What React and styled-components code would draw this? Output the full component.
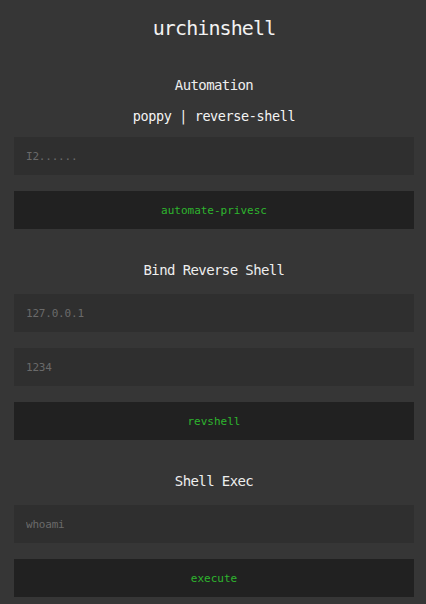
import React from 'react';
import styled, { createGlobalStyle } from 'styled-components';

const GlobalStyle = createGlobalStyle`
	html, body {
		margin: 0;
		padding: 0;
		background: #363636;
	}

	body {
		font-family: "DejaVu Sans Mono", "Liberation Mono", monospace;
		color: #eeeeee;
	}
`;

const sections = [
	{
		title    : 'Automation',
		subtitle : 'poppy | reverse-shell',
		inputs   : ['I2......'],
		action   : 'automate-privesc',
	},
	{
		title  : 'Bind Reverse Shell',
		inputs : ['127.0.0.1', '1234'],
		action : 'revshell',
	},
	{
		title  : 'Shell Exec',
		inputs : ['whoami'],
		action : 'execute',
	},
];

export const App = () => (
	<Page>
		<GlobalStyle />
		<Title>urchinshell</Title>
		{sections.map(section => (
			<Section key={section.title}>
				<Heading>{section.title}</Heading>
				{section.subtitle && <Subtitle>{section.subtitle}</Subtitle>}
				<Fields>
					{section.inputs.map(placeholder => (
						<Input key={placeholder} placeholder={placeholder} />
					))}
					<Button type="button">{section.action}</Button>
				</Fields>
			</Section>
		))}
	</Page>
);

export default App;

const Page = styled.div`
	display: flex;
	flex-direction: column;
	width: 400px;
	margin-left: 14px;
	padding: 16px 0 7px;
	min-height: 604px;
	box-sizing: border-box;
`;

const Title = styled.h1`
	margin: 0;
	font-size: 20px;
	font-weight: normal;
	line-height: 24px;
	letter-spacing: -0.9px;
	text-align: center;
	color: #f2f2f2;
`;

const Section = styled.section`
	display: flex;
	flex-direction: column;
	margin-top: 31px;

	&:first-of-type {
		margin-top: 35px;
	}
`;

const Heading = styled.h3`
	margin: 0 0 14px;
	font-size: 14px;
	font-weight: normal;
	line-height: 20px;
	letter-spacing: -0.6px;
	text-align: center;
	color: #eeeeee;
`;

const Subtitle = styled.div`
	margin: -2px 0 12px;
	font-size: 13.5px;
	line-height: 18px;
	letter-spacing: -0.4px;
	text-align: center;
	color: #f4f4f4;
`;

const Fields = styled.div`
	display: flex;
	flex-direction: column;
	gap: 16px;
`;

const Input = styled.input`
	height: 38px;
	padding: 0 12px;
	border: none;
	outline: none;
	background: #2f2f2f;
	font-family: inherit;
	font-size: 11px;
	letter-spacing: -0.2px;
	color: #cccccc;
	box-sizing: border-box;

	&::placeholder {
		color: #6a6a6a;
	}
`;

const Button = styled.button`
	height: 38px;
	border: none;
	background: #212121;
	font-family: inherit;
	font-size: 11px;
	color: #2eb52e;
	cursor: pointer;
`;
